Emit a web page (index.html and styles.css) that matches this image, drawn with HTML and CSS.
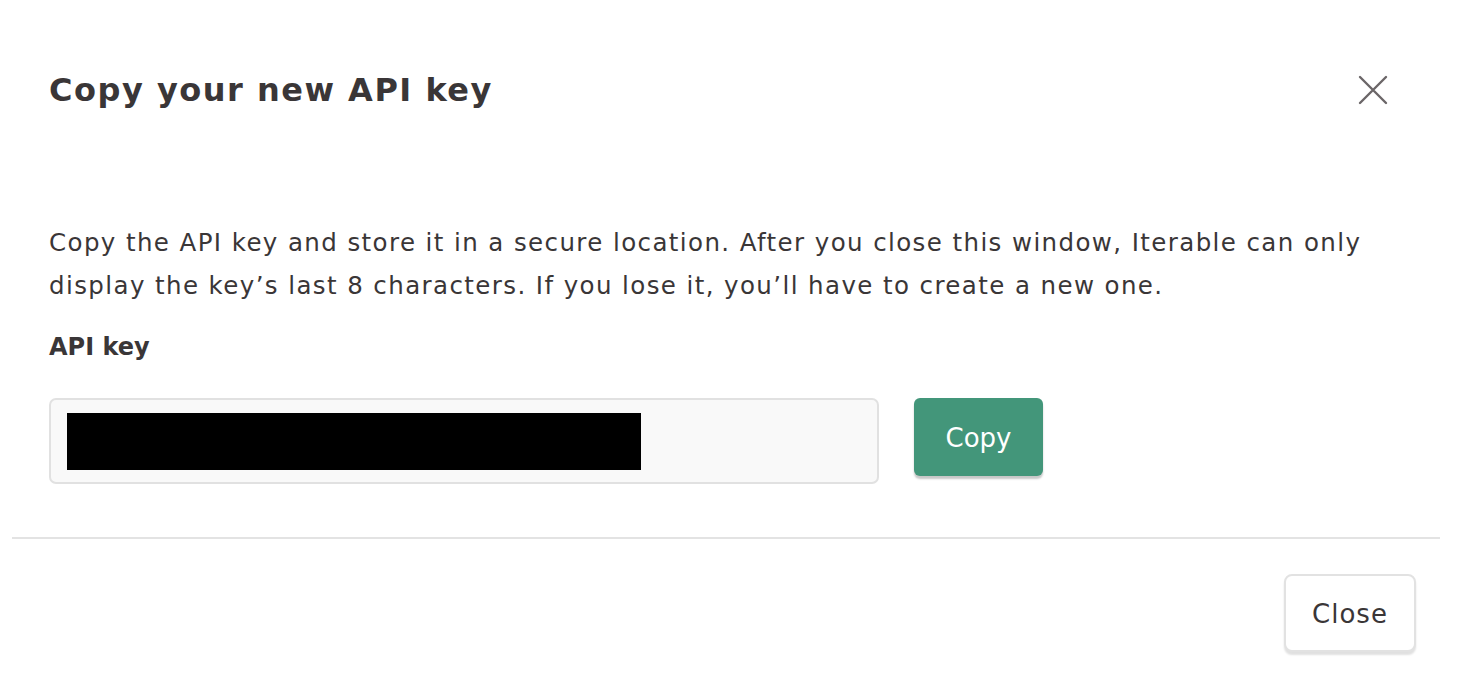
FILE: index.html
```html
<!DOCTYPE html>
<html>
<head>
<meta charset="utf-8">
<link rel="stylesheet" href="styles.css">
</head>
<body>
<div class="modal">
  <div class="modal-header">
    <h1 class="title">Copy your new API key</h1>
    <button class="close-x" aria-label="Close">
      <svg width="30" height="30" viewBox="0 0 30 30"><path d="M2 2 L28 28 M28 2 L2 28" stroke="#6b6668" stroke-width="2.4" stroke-linecap="round" fill="none"/></svg>
    </button>
  </div>
  <div class="modal-body">
    <p class="desc">Copy the API key and store it in a secure location. After you close this window, Iterable can only display the key’s last 8 characters. If you lose it, you’ll have to create a new one.</p>
    <div class="label">API key</div>
    <div class="key-row">
      <div class="key-input"><div class="redact"></div></div>
      <button class="btn-copy">Copy</button>
    </div>
  </div>
  <div class="divider"></div>
  <div class="modal-footer">
    <button class="btn-close">Close</button>
  </div>
</div>
</body>
</html>
```
FILE: styles.css
```css
* { box-sizing: border-box; }
html, body { margin: 0; padding: 0; background: #fff; }
body { font-family: "DejaVu Sans", "Open Sans", sans-serif; color: #3a3637; width: 1460px; height: 694px; overflow: hidden; }
.modal { display: flex; flex-direction: column; }
.modal-header { display: flex; justify-content: space-between; align-items: center; padding: 67px 72px 0 49px; }
.title { margin: 0; font-size: 32px; line-height: 46px; font-weight: 700; letter-spacing: 1.5px; color: #3a3637; }
.close-x { background: none; border: 0; padding: 0; width: 30px; height: 30px; display: flex; cursor: pointer; }
.modal-body { padding: 108px 49px 0 49px; }
.desc { margin: 0; font-size: 24.5px; line-height: 43px; letter-spacing: 1.4px; width: 1345px; color: #3a3637; }
.label { margin-top: 22px; font-size: 24px; line-height: 36px; font-weight: 700; color: #3a3637; }
.key-row { display: flex; align-items: flex-start; gap: 35px; margin-top: 33px; }
.key-input { width: 830px; height: 86px; background: #f9f9f9; border: 2px solid #e1e1e1; border-radius: 7px; padding: 13px 16px; }
.redact { width: 574px; height: 57px; background: #000; }
.btn-copy { width: 129px; height: 78px; background: #43967a; border: 0; border-radius: 6px; color: #fff; font-family: inherit; font-size: 26px; padding-top: 3px; box-shadow: 0 3px 2px rgba(0,0,0,0.22); cursor: pointer; }
.divider { margin: 53px 20px 0 12px; height: 2px; background: #e3e3e3; }
.modal-footer { display: flex; justify-content: flex-end; padding: 35px 44px 0 0; }
.btn-close { width: 132px; height: 78px; background: #fff; border: 2px solid #e2e2e2; border-radius: 8px; color: #3a3637; font-family: inherit; font-size: 26px; letter-spacing: 1px; padding-top: 2px; box-shadow: 0 3px 2px rgba(0,0,0,0.12); cursor: pointer; }
```
